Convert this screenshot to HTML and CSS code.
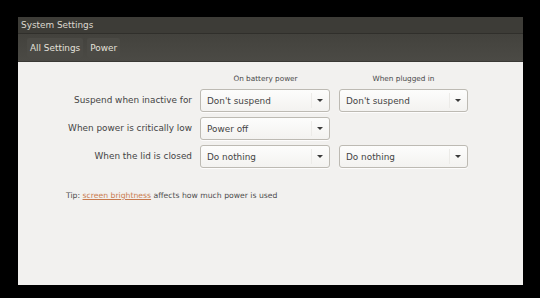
FILE: index.html
```html
<!DOCTYPE html>
<html>
<head>
<meta charset="utf-8">
<link rel="stylesheet" href="styles.css">
</head>
<body>
<div class="window">
  <div class="titlebar">System Settings</div>
  <div class="toolbar">
    <span class="tbtn">All Settings</span>
    <span class="tbtn">Power</span>
  </div>
  <div class="content">
    <div class="grid">
      <div></div>
      <div class="colhead">On battery power</div>
      <div class="colhead">When plugged in</div>

      <div class="label">Suspend when inactive for</div>
      <div class="combo"><span>Don't suspend</span><span class="sep"></span><span class="arrow"></span></div>
      <div class="combo"><span>Don't suspend</span><span class="sep"></span><span class="arrow"></span></div>

      <div class="label">When power is critically low</div>
      <div class="combo"><span>Power off</span><span class="sep"></span><span class="arrow"></span></div>
      <div></div>

      <div class="label">When the lid is closed</div>
      <div class="combo"><span>Do nothing</span><span class="sep"></span><span class="arrow"></span></div>
      <div class="combo"><span>Do nothing</span><span class="sep"></span><span class="arrow"></span></div>
    </div>
    <div class="tip">Tip: <a class="link">screen brightness</a> affects how much power is used</div>
  </div>
</div>
</body>
</html>
```

FILE: styles.css
```css
html, body {
  margin: 0;
  padding: 0;
  background: #000;
}
body {
  padding: 17px 0 0 18px;
  font-family: "DejaVu Sans", sans-serif;
}
.window {
  width: 505px;
  height: 268px;
  display: flex;
  flex-direction: column;
  background: #f2f1ef;
}
.titlebar {
  height: 16px;
  line-height: 17px;
  padding-left: 3px;
  font-size: 8.9px;
  color: #dcd8cf;
  background: #3d3c37;
  border-bottom: 1px solid #302f2b;
}
.toolbar {
  box-sizing: border-box;
  height: 28px;
  background: linear-gradient(#43423d, #4b4a45);
  border-bottom: 1px solid #3a3935;
  display: flex;
  align-items: center;
  padding-left: 9px;
  gap: 4px;
}
.tbtn {
  font-size: 8.9px;
  color: #e4e1da;
  padding: 5px 3px;
  background: #4b4a45;
  border-radius: 2px;
}
.content {
  flex: 1;
  padding-top: 12px;
}
.grid {
  display: grid;
  grid-template-columns: 174px 130px 130px;
  column-gap: 8px;
  row-gap: 5px;
  grid-template-rows: 10px 23px 23px 23px;
}
.grid > :nth-child(3n) {
  margin-left: 1px;
}
.colhead {
  font-size: 7.3px;
  color: #4a4a4a;
  text-align: center;
  line-height: 10px;
}
.grid > .colhead:nth-child(2) {
  padding-left: 1px;
}
.label {
  font-size: 8.9px;
  color: #444;
  text-align: right;
  line-height: 23px;
}
.combo {
  box-sizing: border-box;
  height: 23px;
  border: 1px solid #bdbab3;
  border-radius: 3px;
  background: linear-gradient(#fdfdfc, #f3f2f0);
  box-shadow: 0 1px 0 rgba(255,255,255,0.8);
  display: flex;
  align-items: center;
  padding-left: 6px;
  font-size: 8.9px;
  color: #444;
}
.combo span:first-child {
  flex: 1;
}
.sep {
  width: 1px;
  height: 15px;
  background: #ecebe8;
  margin-right: 5px;
}
.arrow {
  width: 0;
  height: 0;
  border-left: 3px solid transparent;
  border-right: 3px solid transparent;
  border-top: 3px solid #3a3a3a;
  margin-right: 6px;
}
.tip {
  margin-top: 23px;
  margin-left: 48px;
  font-size: 7.7px;
  color: #4d4d4d;
}
.link {
  color: #c97b4e;
  text-decoration: underline;
}
```
